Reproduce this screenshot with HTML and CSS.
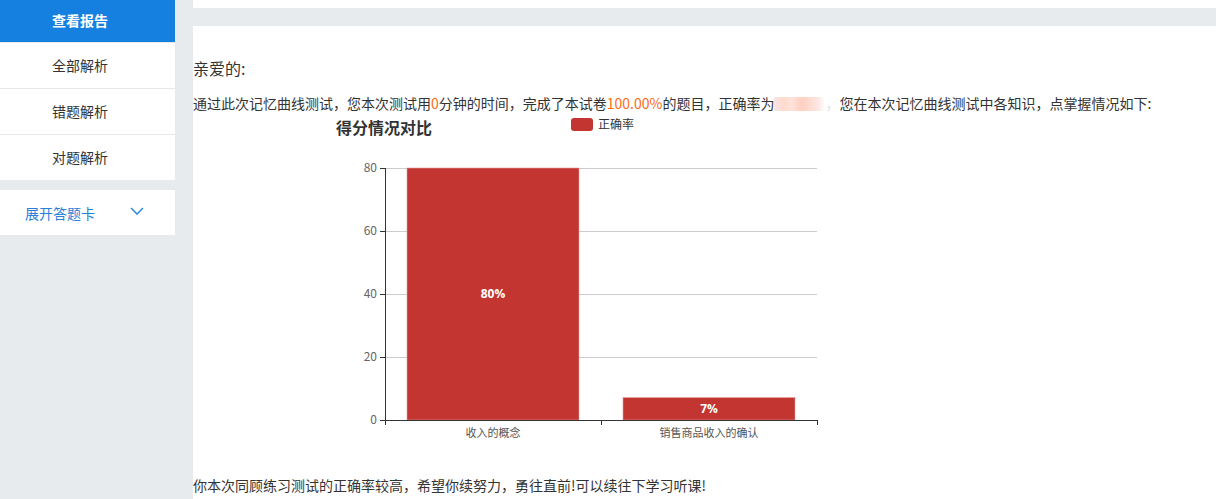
FILE: index.html
```html
<!DOCTYPE html>
<html lang="zh-CN">
<head>
<meta charset="utf-8">
<title>测试报告</title>
<link rel="stylesheet" href="styles.css">
</head>
<body>
<div class="page">
  <aside class="sidebar">
    <nav class="menu">
      <div class="menu-item active">查看报告</div>
      <div class="menu-item">全部解析</div>
      <div class="menu-item">错题解析</div>
      <div class="menu-item last">对题解析</div>
    </nav>
    <div class="card-toggle">
      <span>展开答题卡</span>
      <svg class="chev" width="14" height="8" viewBox="0 0 14 8"><path d="M1 1 L7 7 L13 1" fill="none" stroke="#1a7fe0" stroke-width="1.3"/></svg>
    </div>
  </aside>
  <main class="main">
    <div class="top-strip"></div>
    <section class="report">
      <p class="greet">亲爱的:</p>
      <p class="line">通过此次记忆曲线测试，您本次测试用<span class="hl">0</span>分钟的时间，完成了本试卷<span class="hl">100.00%</span>的题目，正确率为<span class="blur"></span><span class="faint">，</span>您在本次记忆曲线测试中各知识，点掌握情况如下:</p>
      <svg class="chart" width="700" height="362" viewBox="0 0 700 362">
        <g transform="translate(-193,-113)" font-family="'Noto Sans CJK SC',sans-serif">
          <text x="336" y="134" font-size="16" font-weight="bold" fill="#333">得分情况对比</text>
          <rect x="571" y="118" width="22" height="13" rx="3" fill="#c23531"/>
          <text x="598" y="129" font-size="12" fill="#333">正确率</text>
          <g stroke="#ccc" stroke-width="1">
            <line x1="385" y1="168.5" x2="817" y2="168.5"/>
            <line x1="385" y1="231.5" x2="817" y2="231.5"/>
            <line x1="385" y1="294.5" x2="817" y2="294.5"/>
            <line x1="385" y1="357.5" x2="817" y2="357.5"/>
          </g>
          <rect x="407" y="168" width="172" height="252" fill="#c23531" stroke="#e39a98" stroke-width="0.6"/>
          <rect x="623" y="397.6" width="172" height="22.4" fill="#c23531" stroke="#e39a98" stroke-width="0.6"/>
          <g stroke="#333" stroke-width="1">
            <line x1="385.5" y1="168" x2="385.5" y2="420.5"/>
            <line x1="380" y1="168.5" x2="385" y2="168.5"/>
            <line x1="380" y1="231.5" x2="385" y2="231.5"/>
            <line x1="380" y1="294.5" x2="385" y2="294.5"/>
            <line x1="380" y1="357.5" x2="385" y2="357.5"/>
            <line x1="380" y1="420.5" x2="385" y2="420.5"/>
            <line x1="385" y1="420.5" x2="817.5" y2="420.5"/>
            <line x1="385.5" y1="420" x2="385.5" y2="425"/>
            <line x1="601.5" y1="420" x2="601.5" y2="425"/>
            <line x1="817.5" y1="420" x2="817.5" y2="425"/>
          </g>
          <g font-size="12" fill="#666" text-anchor="end">
            <text x="377" y="172">80</text>
            <text x="377" y="235">60</text>
            <text x="377" y="298">40</text>
            <text x="377" y="361">20</text>
            <text x="377" y="424">0</text>
          </g>
          <g font-size="11" fill="#555" text-anchor="middle">
            <text x="493" y="437">收入的概念</text>
            <text x="709" y="437">销售商品收入的确认</text>
          </g>
          <g font-size="12" fill="#fff" font-weight="bold" text-anchor="middle" font-family="'Open Sans',sans-serif">
            <text x="493" y="298">80%</text>
            <text x="709" y="413">7%</text>
          </g>
        </g>
      </svg>
      <p class="line">你本次同顾练习测试的正确率较高，希望你续努力，勇往直前!可以续往下学习听课!</p>
    </section>
  </main>
</div>
</body>
</html>
```

FILE: styles.css
```css
html, body {
  margin: 0;
  padding: 0;
}
body {
  background: #e8ebee;
  font-family: "Noto Sans CJK SC", sans-serif;
  color: #333;
  width: 1216px;
  height: 499px;
  overflow: hidden;
}
.page {
  display: flex;
  align-items: flex-start;
  height: 499px;
}
.sidebar {
  width: 175px;
  flex-shrink: 0;
  display: flex;
  flex-direction: column;
  gap: 10px;
}
.menu {
  display: flex;
  flex-direction: column;
  background: #fff;
}
.menu-item {
  height: 45px;
  line-height: 44px;
  text-align: center;
  padding-right: 15px;
  font-size: 14px;
  color: #333;
  border-bottom: 1px solid #e6e8eb;
  background: #fff;
}
.menu-item.active {
  height: 42px;
  line-height: 40px;
  background: #1580e0;
  color: #fff;
  font-weight: bold;
}
.menu-item.last {
  border-bottom: none;
}
.card-toggle {
  height: 45px;
  background: #fff;
  display: flex;
  align-items: center;
  padding-left: 25px;
  font-size: 14px;
  color: #2a7fd8;
}
.card-toggle .chev {
  margin-left: 35px;
  margin-top: -3px;
}
.main {
  margin-left: 18px;
  flex: 1;
  display: flex;
  flex-direction: column;
  height: 499px;
}
.top-strip {
  height: 8px;
  background: #fff;
  margin-bottom: 18px;
}
.report {
  flex: 1;
  background: #fff;
  padding-top: 30px;
}
.report p {
  margin: 0;
}
.greet {
  font-size: 16px;
  line-height: 24px;
  margin-bottom: 13px !important;
}
.line {
  font-size: 14px;
  line-height: 20px;
  white-space: nowrap;
}
.hl {
  color: #ff6a14;
}
.blur {
  display: inline-block;
  width: 51px;
  height: 14px;
  vertical-align: -2px;
  background: linear-gradient(90deg, #f3e6e4 0%, #ffd9cf 18%, #ffe2da 35%, #ffcfc2 55%, #ffddd3 72%, #fbe9e6 88%, #fff 100%);
}
.faint {
  color: #e2e2e2;
}
.chart {
  display: block;
}
```
